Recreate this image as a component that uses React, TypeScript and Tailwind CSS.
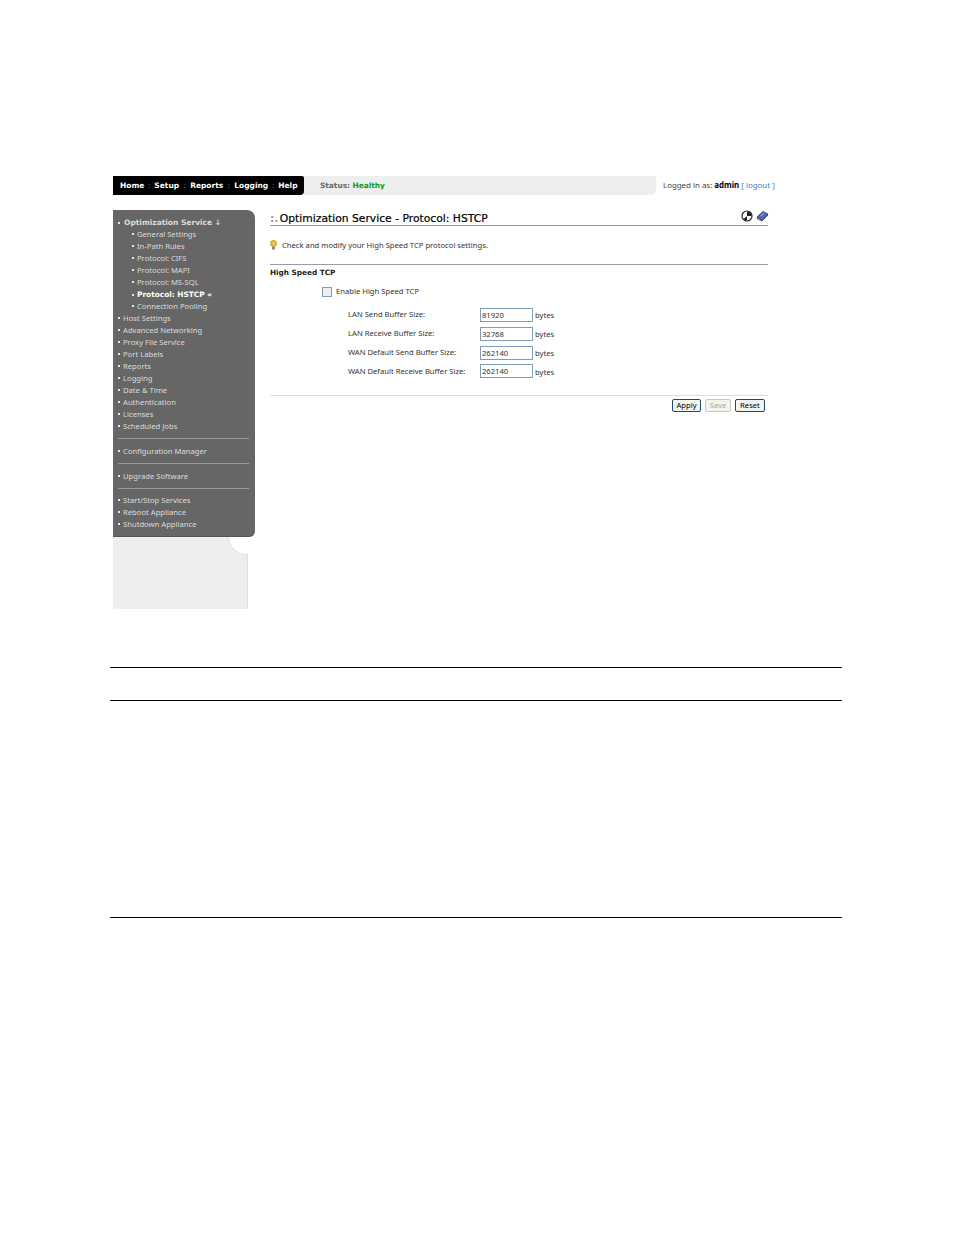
const optimization = ["General Settings", "In-Path Rules", "Protocol: CIFS", "Protocol: MAPI", "Protocol: MS-SQL"];
const mainItems = ["Host Settings", "Advanced Networking", "Proxy File Service", "Port Labels", "Reports", "Logging", "Date & Time", "Authentication", "Licenses", "Scheduled Jobs"];
const fields = [
  { label: "LAN Send Buffer Size:", value: "81920" },
  { label: "LAN Receive Buffer Size:", value: "32768" },
  { label: "WAN Default Send Buffer Size:", value: "262140" },
  { label: "WAN Default Receive Buffer Size:", value: "262140" },
];

function Item({ text, sub, bold }: { text: string; sub?: boolean; bold?: boolean }) {
  return (
    <div className={`h-[12px] leading-[10px] whitespace-nowrap flex items-center ${sub ? "pl-[19px]" : "pl-[5px]"} ${bold ? "font-bold text-white font-['DejaVu_Sans',sans-serif] text-[7.4px]" : "pb-[2px]"}`}>
      <span className="w-[2px] h-[2px] bg-[#e4e4e4] mr-[3px] shrink-0" />
      {text}
    </div>
  );
}

function Sep() {
  return <div className="h-px bg-[#999999] ml-[5px] mr-[6px]" />;
}

function Sep2() {
  return <div className="h-px bg-[#9a9aa8]" />;
}

export default function App() {
  return (
    <div className="w-[954px] h-[1235px] bg-white overflow-hidden pt-[176px] pl-[110px] font-['Noto_Sans',sans-serif] text-[7.65px] text-[#333333]">
      <div className="ml-[3px] w-[662px] h-[433px] flex flex-col">
        <div className="flex h-[19px] items-stretch">
          <div className="w-[191px] shrink-0 bg-black rounded-br-[4px] rounded-tr-[2px] flex items-center pl-[7px] text-white font-bold font-['DejaVu_Sans',sans-serif] text-[7.5px] whitespace-nowrap">
            <span>Home</span>
            <span className="w-[10px] text-center text-[#888888] font-normal">:</span>
            <span>Setup</span>
            <span className="w-[11px] text-center text-[#888888] font-normal">:</span>
            <span>Reports</span>
            <span className="w-[11px] text-center text-[#888888] font-normal">:</span>
            <span>Logging</span>
            <span className="w-[10px] text-center text-[#888888] font-normal">:</span>
            <span>Help</span>
          </div>
          <div className="w-[352px] shrink-0 bg-[#eeeeee] rounded-br-[6px] flex items-center pl-[16px] font-bold font-['DejaVu_Sans',sans-serif] text-[7.4px] text-[#666666]">
            Status:&nbsp;<span className="text-[#0b9a1f]">Healthy</span>
          </div>
          <div className="pl-[7px] pt-px shrink-0 flex items-center whitespace-nowrap text-[7.9px] text-[#444444]">
            Logged in as:&nbsp;<span className="font-bold text-black">admin</span>&nbsp;<span className="text-[#3a7fbf]">[ logout ]</span>
          </div>
        </div>

        <div className="flex mt-[15px] flex-1">
          <div className="w-[142px] shrink-0 flex flex-col">
            <div className="h-[327px] bg-[#666666] rounded-tr-[8px] rounded-br-[6px] border-b border-[#555555] pt-[7px] text-[#dcdcdc]">
              <div className="h-[12px] leading-[12px] flex items-center pl-[5px] font-bold whitespace-nowrap font-['DejaVu_Sans',sans-serif] text-[7.5px]">
                <span className="w-[2px] h-[2px] bg-[#e4e4e4] mr-[4px] shrink-0" />
                Optimization Service&nbsp;↓
              </div>
              <div>
                {optimization.map((t) => <Item key={t} text={t} sub />)}
                <Item text="Protocol: HSTCP «" sub bold />
                <Item text="Connection Pooling" sub />
                {mainItems.map((t) => <Item key={t} text={t} />)}
              </div>
              <div className="mt-[5px]"><Sep /></div>
              <div className="mt-[7px]"><Item text="Configuration Manager" /></div>
              <div className="mt-[5px]"><Sep /></div>
              <div className="mt-[7px]"><Item text="Upgrade Software" /></div>
              <div className="mt-[5px]"><Sep /></div>
              <div className="mt-[6px]">
                <Item text="Start/Stop Services" />
                <Item text="Reboot Appliance" />
                <Item text="Shutdown Appliance" />
              </div>
            </div>
            <div className="relative flex-1 w-[135px] bg-[#eeeeee] border-r border-[#e0e0e0]">
              <div className="absolute -right-px top-0 w-[20px] h-[18px] bg-white rounded-bl-[18px] border-l border-b border-[#e0e0e0]" />
            </div>
          </div>

          <div className="ml-[15px] w-[498px] flex flex-col">
            <div className="h-[16px] flex items-end justify-between border-b border-[#999999] relative">
              <div className="font-['DejaVu_Sans',sans-serif] text-[10.75px] leading-[13px] text-black whitespace-nowrap [-webkit-text-stroke:0.2px_black]">
                <span className="text-[#999999] font-bold mr-[-2px] [-webkit-text-stroke:0]">:.</span> Optimization Service - Protocol: HSTCP
              </div>
              <div className="absolute -right-px top-0 flex gap-[3px]">
                <svg width="12" height="12" viewBox="0 0 12 12">
                  <circle cx="6" cy="6" r="5" fill="#ffffff" stroke="#222222" strokeWidth="1.2" />
                  <path d="M6 1.5 A4.5 4.5 0 0 1 10.5 6 L6 6 Z M6 6 L6 10.5 A4.5 4.5 0 0 1 2.5 9 Z" fill="#222222" />
                </svg>
                <svg width="13" height="12" viewBox="0 0 13 12">
                  <path d="M1 7 L7 1.5 L12 4 L6 10.5 Z" fill="#5566b0" stroke="#2a3570" strokeWidth="0.8" />
                  <path d="M1 7 L1.5 9 L6 11 L12 5" fill="none" stroke="#2a3570" strokeWidth="0.8" />
                  <path d="M4.5 6 L8 3.5" stroke="#c5cdf0" strokeWidth="0.8" />
                </svg>
              </div>
            </div>

            <div className="mt-[13px] h-[14px] flex items-center whitespace-nowrap text-[#333333]">
              <svg width="7" height="10" viewBox="0 0 7 10" className="mr-[5px] -mt-[2px]">
                <circle cx="3.5" cy="3.5" r="3" fill="#f5c82a" stroke="#9a7a10" strokeWidth="0.7" />
                <rect x="2" y="6.5" width="3" height="3" fill="#8a8a70" />
              </svg>
              Check and modify your High Speed TCP protocol settings.
            </div>

            <div className="mt-[11px]"><Sep2 /></div>

            <div className="mt-[2px] h-[12px] leading-[12px] font-bold font-['DejaVu_Sans',sans-serif] text-[7.3px] text-[#222222]">High Speed TCP</div>

            <div className="mt-[7px] ml-[52px] h-[12px] flex items-center text-[#333333] whitespace-nowrap">
              <span className="w-[10px] h-[10px] border border-[#7f9db9] bg-[#eeeeee] mr-[4px] shrink-0" />
              Enable High Speed TCP
            </div>

            <div className="mt-[10px] flex flex-col gap-[4.8px] text-[#333333]">
              {fields.map((f) => (
                <div key={f.label} className="flex items-center h-[14px] whitespace-nowrap">
                  <span className="ml-[78px] w-[132px]">{f.label}</span>
                  <span className="w-[53px] h-[14px] leading-[12px] border border-[#7f9db9] pl-[1px] bg-white">{f.value}</span>
                  <span className="ml-[2px] pt-[2px]">bytes</span>
                </div>
              ))}
            </div>

            <div className="mt-[17px] h-px bg-[#dddddd]" />

            <div className="mt-[3px] mr-[3px] flex justify-end gap-[4px]">
              <span className="w-[29px] h-[13px] leading-[11px] text-center border border-[#1c4a74] rounded-[2px] bg-[#f4f4ee] text-black">Apply</span>
              <span className="w-[26px] h-[13px] leading-[11px] text-center border border-[#c8c8bc] rounded-[2px] bg-[#f4f4ee] text-[#aaaaa0]">Save</span>
              <span className="w-[30px] h-[13px] leading-[11px] text-center border border-[#1c4a74] rounded-[2px] bg-[#f4f4ee] text-black">Reset</span>
            </div>
          </div>
        </div>
      </div>

      <div className="mt-[58px] w-[732px] h-px bg-black" />
      <div className="mt-[32px] w-[732px] h-px bg-black" />
      <div className="mt-[216px] w-[732px] h-px bg-black" />
    </div>
  );
}
